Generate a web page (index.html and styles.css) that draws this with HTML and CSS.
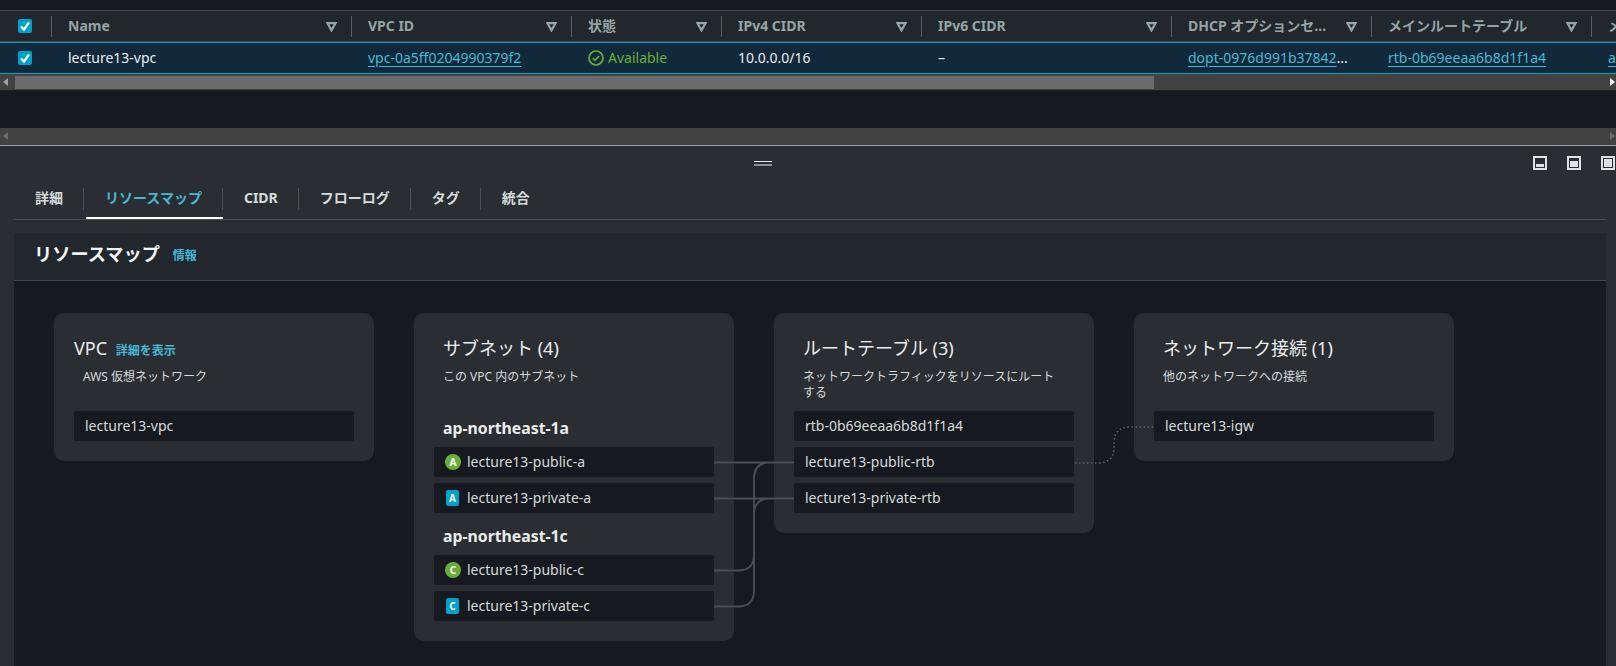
FILE: index.html
```html
<!DOCTYPE html>
<html lang="ja">
<head>
<meta charset="utf-8">
<title>VPC リソースマップ</title>
<link rel="stylesheet" href="styles.css">
</head>
<body>
<section class="table-area">
  <div class="row head">
    <div class="cell check"><span class="checkbox"><svg viewBox="0 0 14 14"><path d="M3 7.5l3 3 5-7" /></svg></span></div>
    <div class="cell"><span>Name</span><svg class="filter" viewBox="0 0 11 10"><path d="M1.5 1.2h8L5.5 8.4z"/></svg></div>
    <div class="cell"><span>VPC ID</span><svg class="filter" viewBox="0 0 11 10"><path d="M1.5 1.2h8L5.5 8.4z"/></svg></div>
    <div class="cell"><span>状態</span><svg class="filter" viewBox="0 0 11 10"><path d="M1.5 1.2h8L5.5 8.4z"/></svg></div>
    <div class="cell"><span>IPv4 CIDR</span><svg class="filter" viewBox="0 0 11 10"><path d="M1.5 1.2h8L5.5 8.4z"/></svg></div>
    <div class="cell"><span>IPv6 CIDR</span><svg class="filter" viewBox="0 0 11 10"><path d="M1.5 1.2h8L5.5 8.4z"/></svg></div>
    <div class="cell"><span>DHCP オプションセ...</span><svg class="filter" viewBox="0 0 11 10"><path d="M1.5 1.2h8L5.5 8.4z"/></svg></div>
    <div class="cell"><span>メインルートテーブル</span><svg class="filter" viewBox="0 0 11 10"><path d="M1.5 1.2h8L5.5 8.4z"/></svg></div>
    <div class="cell"><span>メ</span></div>
  </div>
  <div class="row body">
    <div class="cell check"><span class="checkbox"><svg viewBox="0 0 14 14"><path d="M3 7.5l3 3 5-7" /></svg></span></div>
    <div class="cell">lecture13-vpc</div>
    <div class="cell"><a class="link">vpc-0a5ff0204990379f2</a></div>
    <div class="cell ok"><svg class="ok-icon" viewBox="0 0 16 16"><circle cx="8" cy="8" r="7"/><path d="M4.8 8.2l2.2 2.2 4.2-4.4"/></svg>Available</div>
    <div class="cell">10.0.0.0/16</div>
    <div class="cell">–</div>
    <div class="cell"><a class="link">dopt-0976d991b37842</a>...</div>
    <div class="cell"><a class="link">rtb-0b69eeaa6b8d1f1a4</a></div>
    <div class="cell"><a class="link">a</a></div>
  </div>
  <div class="scrollbar main"><b class="arrow left"></b><span class="thumb"></span><b class="arrow right"></b></div>
  <div class="gap"></div>
  <div class="scrollbar idle"><b class="arrow left"></b><b class="arrow right"></b></div>
</section>
<section class="panel">
  <div class="panel-bar">
    <span class="grip"></span>
    <div class="panel-tools">
      <span class="tool t1"></span><span class="tool t2"></span><span class="tool t3"></span>
    </div>
  </div>
  <nav class="tabs">
    <a class="tab">詳細</a>
    <a class="tab active">リソースマップ</a>
    <a class="tab">CIDR</a>
    <a class="tab">フローログ</a>
    <a class="tab">タグ</a>
    <a class="tab last">統合</a>
  </nav>
  <div class="map-box">
    <header class="map-head"><h2>リソースマップ</h2><a class="info">情報</a></header>
    <div class="map">
      <svg class="wires" viewBox="0 0 1616 666" aria-hidden="true">
        <path d="M714 462.5H794M714 498.5H794M714 570.5H738Q754 570.5 754 554.5V478.5Q754 462.5 770 462.5H794M714 606.5H738Q754 606.5 754 590.5V514.5Q754 498.5 770 498.5H794"/>
        <path class="dots" d="M1075 463H1098Q1114 463 1114 447V443Q1114 427 1130 427H1154"/>
      </svg>
      <article class="card">
        <h3 class="flush">VPC <a class="more">詳細を表示</a></h3>
        <p class="desc">AWS 仮想ネットワーク</p>
        <div class="item">lecture13-vpc</div>
      </article>
      <article class="card">
        <h3>サブネット (4)</h3>
        <p class="desc">この VPC 内のサブネット</p>
        <h4>ap-northeast-1a</h4>
        <div class="item"><span class="az pub">A</span>lecture13-public-a</div>
        <div class="item"><span class="az pri">A</span>lecture13-private-a</div>
        <h4 class="second">ap-northeast-1c</h4>
        <div class="item"><span class="az pub">C</span>lecture13-public-c</div>
        <div class="item"><span class="az pri">C</span>lecture13-private-c</div>
      </article>
      <article class="card">
        <h3>ルートテーブル (3)</h3>
        <p class="desc">ネットワークトラフィックをリソースにルートする</p>
        <div class="item">rtb-0b69eeaa6b8d1f1a4</div>
        <div class="item">lecture13-public-rtb</div>
        <div class="item">lecture13-private-rtb</div>
      </article>
      <article class="card">
        <h3>ネットワーク接続 (1)</h3>
        <p class="desc">他のネットワークへの接続</p>
        <div class="item">lecture13-igw</div>
      </article>
    </div>
  </div>
</section>
</body>
</html>
```
FILE: styles.css
```css
* { box-sizing: border-box; }
html, body { margin: 0; height: 666px; overflow: hidden; }
body {
  background: #16191f;
  color: #d5dbdb;
  font-family: "Noto Sans", "Noto Sans CJK JP", sans-serif;
  font-size: 14px;
}
a { color: #44b9d6; }
.table-area { display: flex; flex-direction: column; }
.row {
  display: grid;
  grid-template-columns: 51px 300px 220px 150px 200px 250px 200px 220px 25px;
  overflow: hidden;
}
.head {
  height: 32px;
  margin-top: 10px;
  background: #22262d;
  border-top: 1px solid #414750;
  border-bottom: 1px solid #414750;
  font-weight: 700;
  color: #95a5a6;
}
.head .cell { position: relative; display: flex; align-items: center; padding: 0 0 2px 17px; height: 30px; white-space: nowrap; }
.head .cell + .cell::before {
  content: "";
  position: absolute; left: 0; top: 5px;
  height: 21px; width: 1px;
  background: #5a6068;
}
.filter {
  position: absolute; right: 14px; top: 11px;
  width: 11px; height: 10px;
  fill: none; stroke: #95a5a6; stroke-width: 2.2;
}
.body {
  height: 32px;
  background: #12293b;
  border-top: 1px solid #00a1c9;
  border-bottom: 1px solid #00a1c9;
  color: #eaeded;
}
.body .cell { display: flex; align-items: center; padding: 0 0 2px 17px; white-space: nowrap; }
.link { text-decoration: underline; text-underline-offset: 3px; }
.head .cell.check, .body .cell.check { padding: 0 0 0 18px; }
.checkbox {
  width: 14px; height: 14px;
  background: #00a1c9;
  border-radius: 2px;
  display: block;
}
.checkbox svg { display: block; width: 14px; height: 14px; fill: none; stroke: #fff; stroke-width: 2.2; }
.ok { color: #6aaf35; gap: 4px; }
.ok-icon { width: 16px; height: 16px; margin-top: 2px; fill: none; stroke: #6aaf35; stroke-width: 1.7; }
.scrollbar { height: 17px; background: #424242; position: relative; }
.scrollbar.main { border-bottom: 1px solid #1f1f1f; }
.thumb { display: block; position: absolute; left: 15px; top: 2px; width: 1139px; height: 13px; background: #6b6b6b; }
.arrow { position: absolute; top: 4px; width: 0; height: 0; border-top: 4px solid transparent; border-bottom: 4px solid transparent; }
.arrow.left { left: 3px; border-right: 5px solid #a0a0a0; }
.arrow.right { right: 1px; border-left: 5px solid #fff; }
.idle .arrow.left { border-right-color: #6b6b6b; }
.idle .arrow.right { border-left-color: #6b6b6b; }
.gap { height: 37px; }
.panel { background: #2a2e33; border-top: 1px solid #9aa3a3; height: 521px; }
.panel-bar { height: 32px; position: relative; }
.grip {
  position: absolute; left: 754px; top: 15px;
  width: 18px; height: 5px;
  border-top: 1px solid #eaeded;
  border-bottom: 2px solid #8d9090;
}
.panel-tools { position: absolute; right: 1px; top: 10px; display: flex; gap: 20px; }
.tool { width: 14px; height: 14px; border: 2px solid #dfe3e6; display: block; position: relative; }
.tool::after { content: ""; position: absolute; left: 1px; right: 1px; bottom: 1px; background: #dfe3e6; }
.t1::after { height: 3px; }
.t2::after { height: 6px; }
.t3::after { height: 8px; }
.tabs {
  margin: 10px 10px 0 14px;
  height: 32px;
  display: flex;
  border-bottom: 1px solid #4b5057;
  font-weight: 700;
  color: #d5dbdb;
}
.tab { position: relative; padding: 0 20px 0 21px; height: 31px; line-height: 20px; color: inherit; }
.tab:not(.last)::after {
  content: ""; position: absolute; right: 0; top: 0;
  width: 1px; height: 22px;
  background: #4b5057;
}
.tab:not(.last) { padding-right: 21px; }
.active { color: #44b9d6; }
.active::before {
  content: ""; position: absolute; left: 2px; right: 0; bottom: 0;
  height: 2px; background: #fff;
}
.map-box { margin: 13px 10px 0 14px; height: 440px; background: #16191f; }
.map-head {
  height: 48px;
  background: #22262d;
  border-bottom: 1px solid #414750;
  display: flex;
  align-items: center;
  padding: 0 0 8px 20px;
  gap: 13px;
}
.map-head h2 { margin: 0; font-size: 18.2px; font-weight: 700; color: #f2f4f5; }
.info { font-size: 12px; font-weight: 700; margin-top: 5px; }
.map { display: flex; align-items: flex-start; gap: 40px; padding: 32px 40px; position: relative; }
.wires { position: absolute; z-index: 1; left: -14px; top: -281px; width: 1616px; height: 666px; fill: none; stroke: #4a4f57; stroke-width: 1.8; pointer-events: none; }
.wires .dots { stroke-width: 1.6; stroke-dasharray: 1.6 2.4; stroke: #5a5f66; }
.card {
  width: 320px;
  flex: none;
  background: #2a2e33;
  border-radius: 10px;
  padding: 20px;
}
h3 { margin: 0; padding: 0 9px; font-size: 18px; font-weight: 400; line-height: 30px; height: 30px; color: #eaeded; }
h3.flush { padding: 0; }
.more { font-size: 12px; font-weight: 700; margin-left: 4px; }
.desc { margin: 6px 0 0; padding: 0 9px; font-size: 12px; line-height: 16px; min-height: 42px; color: #d5dbdb; }
.item {
  height: 30px;
  margin-bottom: 6px;
  padding: 0 0 2px 11px;
  background: #16191f;
  border-radius: 2px;
  display: flex;
  align-items: center;
  color: #d5dbdb;
}
.item:last-child { margin-bottom: 0; }
h4 { margin: 6px 0 8px; padding: 0 9px; font-size: 15.8px; font-weight: 700; line-height: 22px; color: #eaeded; }
h4.second { margin: 12px 0 8px; }
.az {
  width: 16px; height: 16px; margin-top: 2px; margin-right: 6px;
  display: flex; align-items: center; justify-content: center;
  font-size: 10px; font-weight: 700; color: #fff;
}
.pub { background: #6aaf35; border-radius: 50%; }
.pri { background: #00a1c9; border-radius: 2px; width: 13px; margin-left: 1px; margin-right: 8px; }
```
